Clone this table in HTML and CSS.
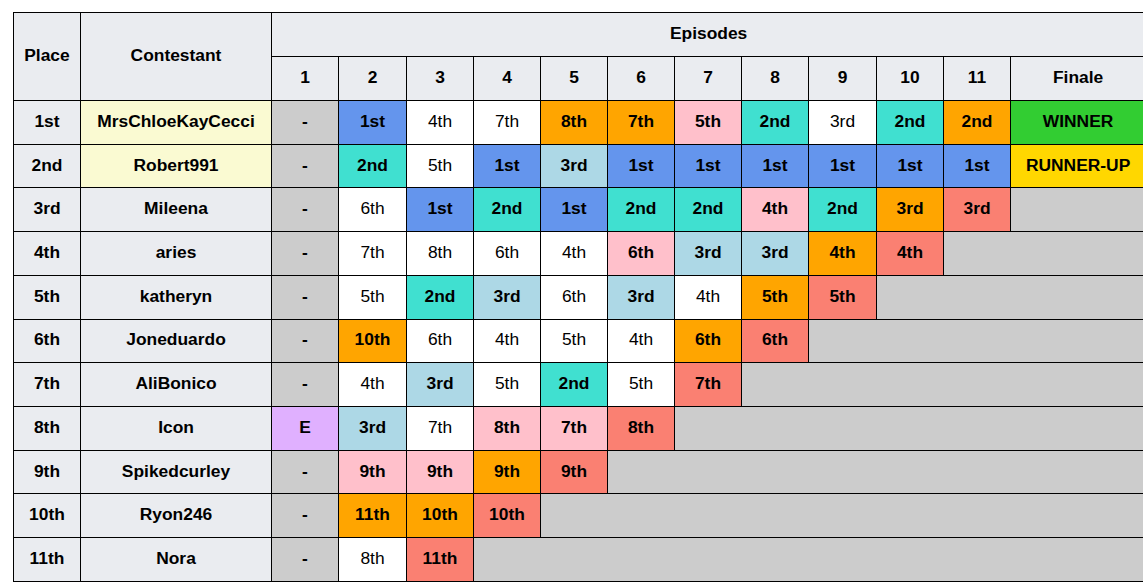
FILE: index.html
```html
<!DOCTYPE html>
<html>
<head>
<meta charset="utf-8">
<title>Episodes</title>
<link rel="stylesheet" href="styles.css">
</head>
<body>
<div class="wrap">
<table class="results">
<colgroup>
<col class="c-place"><col class="c-name">
<col class="c-ep"><col class="c-ep2"><col class="c-ep"><col class="c-ep"><col class="c-ep"><col class="c-ep"><col class="c-ep"><col class="c-ep"><col class="c-ep2"><col class="c-ep"><col class="c-ep">
<col class="c-fin">
</colgroup>
<thead>
<tr class="hrow">
<th rowspan="2">Place</th>
<th rowspan="2">Contestant</th>
<th colspan="12">Episodes</th>
</tr>
<tr class="hrow">
<th>1</th><th>2</th><th>3</th><th>4</th><th>5</th><th>6</th><th>7</th><th>8</th><th>9</th><th>10</th><th>11</th><th>Finale</th>
</tr>
</thead>
<tbody>
<tr>
<th>1st</th><td class="name">MrsChloeKayCecci</td>
<td class="na">-</td><td class="blue">1st</td><td class="w">4th</td><td class="w">7th</td><td class="orange">8th</td><td class="orange">7th</td><td class="pink">5th</td><td class="turq">2nd</td><td class="w">3rd</td><td class="turq">2nd</td><td class="orange">2nd</td><td class="green">WINNER</td>
</tr>
<tr>
<th>2nd</th><td class="name">Robert991</td>
<td class="na">-</td><td class="turq">2nd</td><td class="w">5th</td><td class="blue">1st</td><td class="lblue">3rd</td><td class="blue">1st</td><td class="blue">1st</td><td class="blue">1st</td><td class="blue">1st</td><td class="blue">1st</td><td class="blue">1st</td><td class="gold">RUNNER-UP</td>
</tr>
<tr>
<th>3rd</th><th>Mileena</th>
<td class="na">-</td><td class="w">6th</td><td class="blue">1st</td><td class="turq">2nd</td><td class="blue">1st</td><td class="turq">2nd</td><td class="turq">2nd</td><td class="pink">4th</td><td class="turq">2nd</td><td class="orange">3rd</td><td class="salmon">3rd</td><td class="na"></td>
</tr>
<tr>
<th>4th</th><th>aries</th>
<td class="na">-</td><td class="w">7th</td><td class="w">8th</td><td class="w">6th</td><td class="w">4th</td><td class="pink">6th</td><td class="lblue">3rd</td><td class="lblue">3rd</td><td class="orange">4th</td><td class="salmon">4th</td><td class="na" colspan="2"></td>
</tr>
<tr>
<th>5th</th><th>katheryn</th>
<td class="na">-</td><td class="w">5th</td><td class="turq">2nd</td><td class="lblue">3rd</td><td class="w">6th</td><td class="lblue">3rd</td><td class="w">4th</td><td class="orange">5th</td><td class="salmon">5th</td><td class="na" colspan="3"></td>
</tr>
<tr>
<th>6th</th><th>Joneduardo</th>
<td class="na">-</td><td class="orange">10th</td><td class="w">6th</td><td class="w">4th</td><td class="w">5th</td><td class="w">4th</td><td class="orange">6th</td><td class="salmon">6th</td><td class="na" colspan="4"></td>
</tr>
<tr>
<th>7th</th><th>AliBonico</th>
<td class="na">-</td><td class="w">4th</td><td class="lblue">3rd</td><td class="w">5th</td><td class="turq">2nd</td><td class="w">5th</td><td class="salmon">7th</td><td class="na" colspan="5"></td>
</tr>
<tr>
<th>8th</th><th>Icon</th>
<td class="mauve">E</td><td class="lblue">3rd</td><td class="w">7th</td><td class="pink">8th</td><td class="pink">7th</td><td class="salmon">8th</td><td class="na" colspan="6"></td>
</tr>
<tr>
<th>9th</th><th>Spikedcurley</th>
<td class="na">-</td><td class="pink">9th</td><td class="pink">9th</td><td class="orange">9th</td><td class="salmon">9th</td><td class="na" colspan="7"></td>
</tr>
<tr>
<th>10th</th><th>Ryon246</th>
<td class="na">-</td><td class="orange">11th</td><td class="orange">10th</td><td class="salmon">10th</td><td class="na" colspan="8"></td>
</tr>
<tr>
<th>11th</th><th>Nora</th>
<td class="na">-</td><td class="w">8th</td><td class="salmon">11th</td><td class="na" colspan="9"></td>
</tr>
</tbody>
</table>
</div>
</body>
</html>
```

FILE: styles.css
```css
html, body {
  margin: 0;
  padding: 0;
  background: #ffffff;
  overflow: hidden;
}

.wrap {
  margin: 12px 0 0 13px;
  width: 1130px;
  overflow: hidden;
}

.results {
  border-collapse: collapse;
  table-layout: fixed;
  width: 1133px;
  font-family: "Liberation Sans", Arial, sans-serif;
  font-size: 17.4px;
  color: #000;
}

.c-place { width: 67px; }
.c-name { width: 191px; }
.c-ep { width: 67px; }
.c-ep2 { width: 68px; }
.c-fin { width: 135px; }

.results th,
.results td {
  border: 1px solid #000;
  padding: 0 0 2px 0;
  text-align: center;
  vertical-align: middle;
  font-weight: bold;
  white-space: nowrap;
  overflow: hidden;
}

.results th {
  background: #eaecf0;
}

.hrow {
  height: 44px;
}

.results tbody tr {
  height: 43.73px;
}

.results td.name { background: #fafad2; }
.results td.na { background: #cccccc; }
.results td.w { background: #ffffff; font-weight: normal; }
.results td.blue { background: #6495ed; }
.results td.turq { background: #40e0d0; }
.results td.orange { background: #ffa500; }
.results td.pink { background: #ffc0cb; }
.results td.lblue { background: #add8e6; }
.results td.salmon { background: #fa8072; }
.results td.green { background: #32cd32; }
.results td.gold { background: #ffd700; }
.results td.mauve { background: #e0b0ff; }
```
